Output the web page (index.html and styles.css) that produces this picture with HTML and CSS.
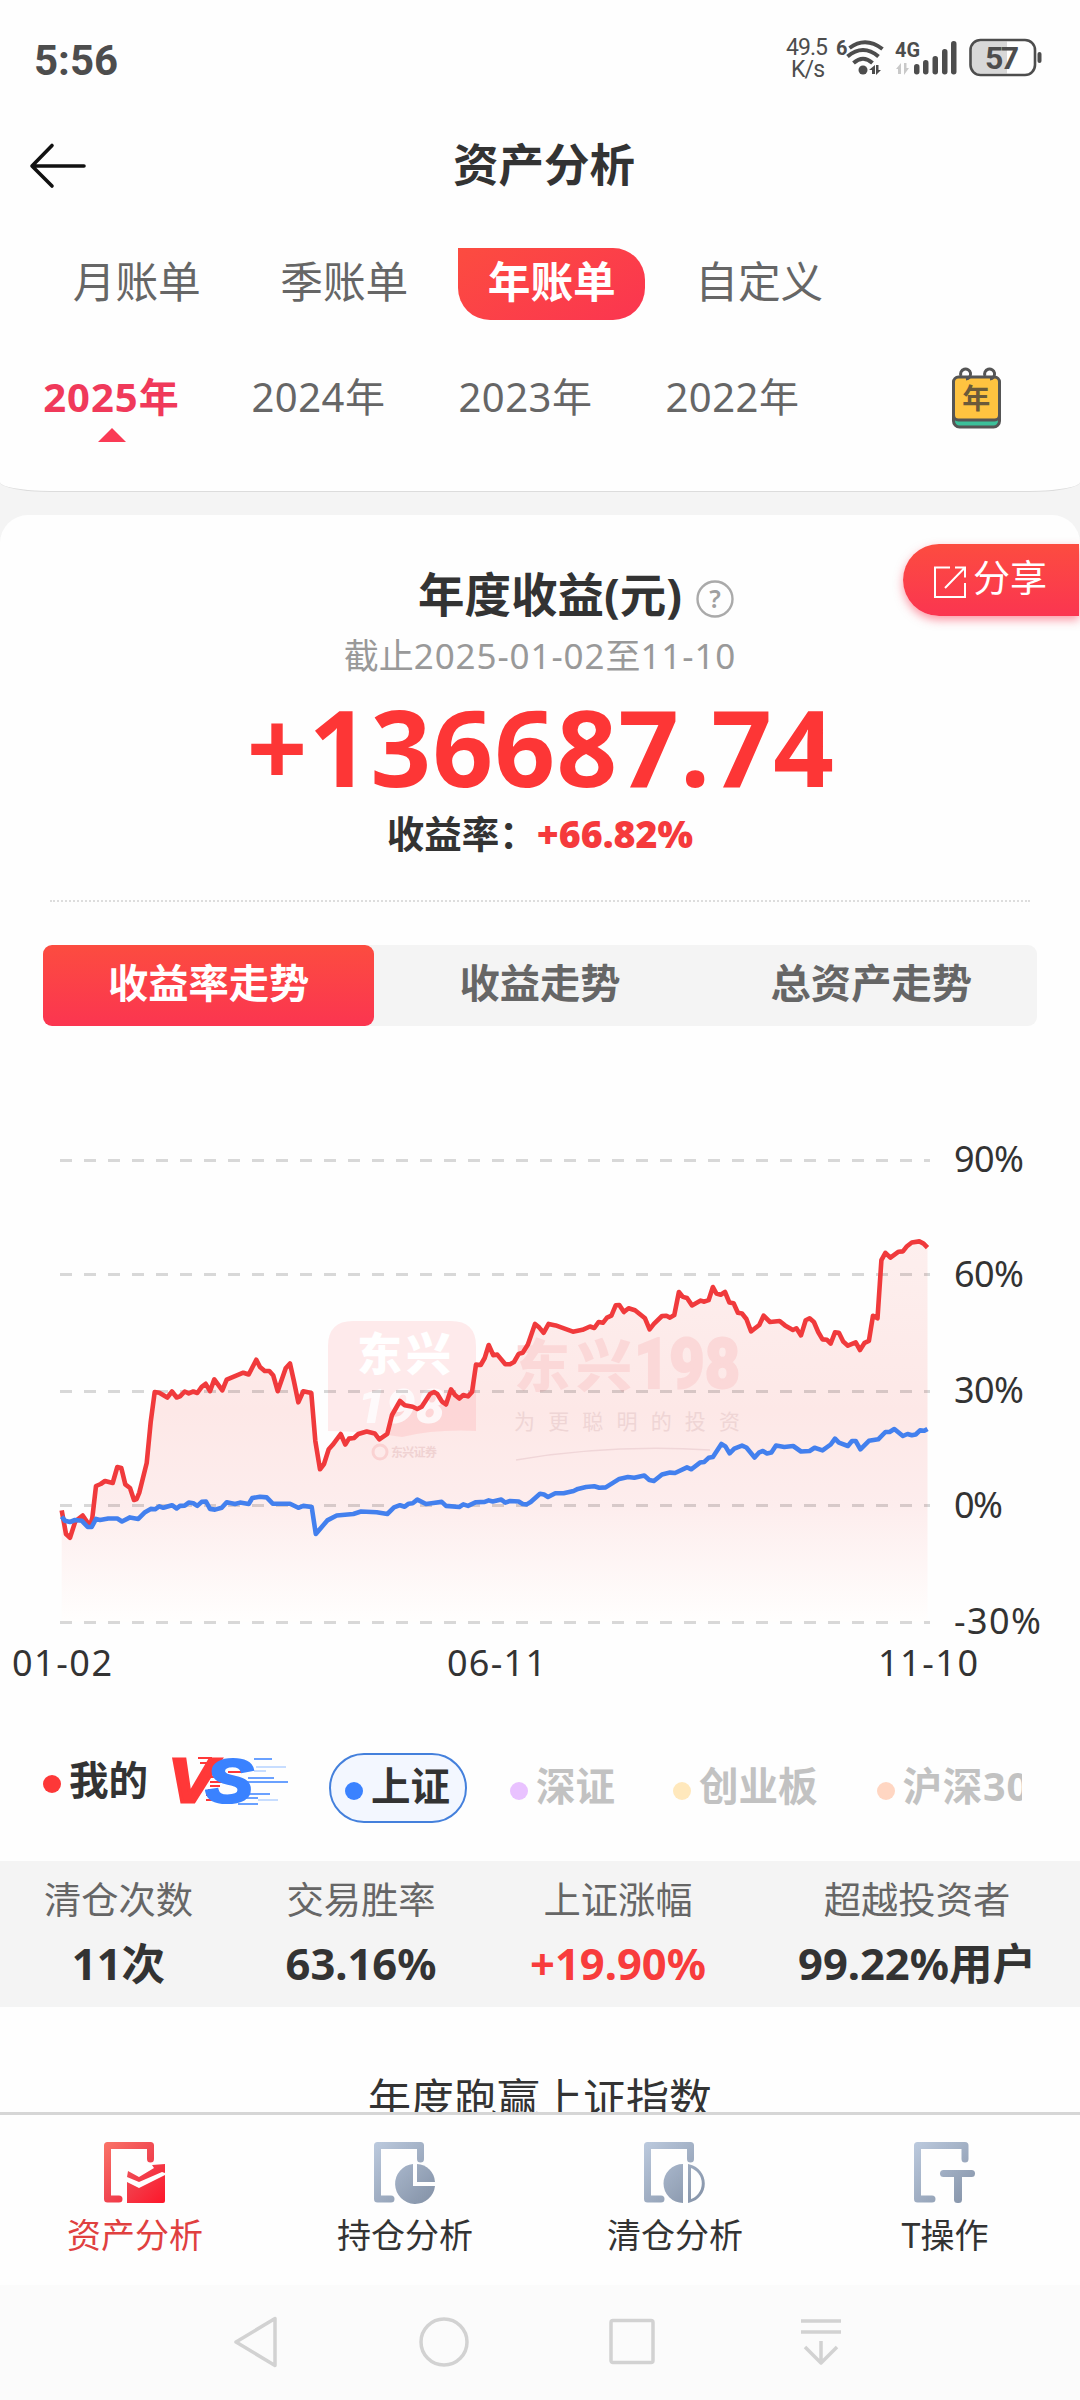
FILE: index.html
```html
<!DOCTYPE html>
<html lang="zh-CN">
    <head>
        <meta charset="UTF-8">
        <title>资产分析</title>
        <link rel="stylesheet" href="styles.css">
    </head>
    <body>
        <!-- Phone status bar -->
        <div class="status-bar">
            <span class="time">5:56</span>
            <svg class="status-icons" width="270" height="60" viewBox="0 0 270 60">
                <g fill="#4d4d4d">
                    <text x="-1" y="25" font-size="23" textLength="42">49.5</text>
                    <text x="4" y="47" font-size="23" textLength="34">K/s</text>
                    <text x="49" y="25" font-size="20" font-weight="700" textLength="10">6</text>
                    <circle cx="76" cy="40" r="4.5"/>
                    <path d="M82 40l6-5v9h-3v-4zM94 40l-5 5v-10h2.500v5z"/>
                    <text x="108" y="27" font-size="21" font-weight="700" textLength="25" lengthAdjust="spacingAndGlyphs">4G</text>
                    <rect x="127" y="34" width="5.500" height="10.500" rx="2.700"/>
                    <rect x="136" y="30" width="5.500" height="14.500" rx="2.700"/>
                    <rect x="145.500" y="26" width="5.500" height="18.500" rx="2.700"/>
                    <rect x="155" y="19" width="5.500" height="25.500" rx="2.700"/>
                    <rect x="164" y="11" width="5.500" height="33.500" rx="2.700"/>
                    <rect x="250.500" y="22" width="4" height="11" rx="2"/>
                </g>
                <path d="M109 39l5-6v11h-3v-5zM122 38l-5 7v-12h2.500v5z" fill="#c9c9c9"/>
                <g fill="none" stroke="#4d4d4d" stroke-width="4">
                    <path d="M62.500 18q16-12 33 1"/>
                    <path d="M60.500 26.500q15.500-13 31 0"/>
                    <path d="M66.500 33q9.500-8.500 19 0"/>
                </g>
                <path d="M220 11.500h-26q-10 0-10 10v12q0 10 10 10h26z" fill="#d8d8d8"/>
                <rect x="183.500" y="10" width="64.500" height="35" rx="10" fill="none" stroke="#4d4d4d" stroke-width="2.600"/>
                <text x="198" y="39" font-size="32" font-weight="700" fill="#4d4d4d" textLength="34">57</text>
            </svg>
        </div>

        <header class="header">
            <svg class="back" width="60" height="50" viewBox="0 0 60 50" fill="none" stroke="#111" stroke-width="3.600" stroke-linecap="round" stroke-linejoin="round">
                <path d="M55 27H4M23 6.500L3 27l20 20"/>
            </svg>
            <h1>资产分析</h1>
        </header>

        <div class="filter">
            <ul class="bill-tabs">
                <li>月账单</li>
                <li>季账单</li>
                <li class="active"><span>年账单</span></li>
                <li>自定义</li>
            </ul>
            <ul class="years">
                <li class="active"><span>2025年</span><i></i></li>
                <li><span>2024年</span></li>
                <li><span>2023年</span></li>
                <li><span>2022年</span></li>
                <li class="calendar">
                    <svg width="50" height="60" viewBox="0 0 50 60">
                        <rect x="1.500" y="8" width="46" height="49" rx="6" fill="#3cc09a" stroke="#555" stroke-width="3"/>
                        <rect x="1.500" y="7" width="46" height="43" rx="5" fill="#ffc340" stroke="#555" stroke-width="3"/>
                        <path d="M9 10a5 5 0 1 1 5 3M33 10a5 5 0 1 1 5 3" transform="translate(0 -4)" fill="none" stroke="#555" stroke-width="3"/>
                        <text x="24.500" y="39" font-size="28" font-weight="700" text-anchor="middle" fill="#6b5a3a">年</text>
                    </svg>
                </li>
            </ul>
        </div>

        <main class="card">
            <a class="share">
                <svg width="32" height="32" viewBox="0 0 32 32" fill="none" stroke="#fff" stroke-width="2">
                    <path d="M16 1.500H1v29.500h30V17M21 1.500h10v10M31 1.500L11 22"/>
                </svg>
                分享
            </a>
            <div class="profit">
                <h2>年度收益(元)<svg width="38" height="38" viewBox="0 0 38 38"><circle cx="19" cy="19" r="17.500" fill="none" stroke="#aaa" stroke-width="2.400"/><text x="19" y="28" font-size="25" font-weight="600" text-anchor="middle" fill="#a0a0a0">?</text></svg></h2>
                <p class="range">截止<span>2025-01-02</span>至<span>11-10</span></p>
                <p class="amount">+136687.74</p>
                <p class="rate">收益率：<b>+66.82%</b></p>
            </div>

            <ul class="trend-tabs">
                <li class="active">收益率走势</li>
                <li>收益走势</li>
                <li>总资产走势</li>
            </ul>

            <svg class="chart" width="1080" height="570" viewBox="0 0 1080 570">
                <defs>
                    <linearGradient id="area" gradientUnits="userSpaceOnUse" x1="0" y1="110" x2="0" y2="490">
                        <stop offset="0" stop-color="#fdefee"/>
                        <stop offset=".45" stop-color="#fde8e7"/>
                        <stop offset=".7" stop-color="#fdeded"/>
                        <stop offset="1" stop-color="#fffefd"/>
                    </linearGradient>
                </defs>
                <path fill="url(#area)" d="M61.7 380L66 404L70 408L75 391L83 385L90 396L92 388L96 356L101 354L105 351L113 353L117 337L121 338L125 354L130 358L134 370L139 363L147 333L151 292L155 262L159 263L167 267L172 261L177 267L185 261L197 263L206 254L210 261L214 249L222 260L227 250L243 243L249 244L256 230L265 241L269 241L273 246L278 261L286 238L290 233L298 272L303 261L311 263L315 311L320 339L329 319L341 304L345 314L349 309L358 304L367 301L375 303L379 309L387 304L392 285L400 271L405 275L417 279L422 277L430 264L434 262L442 272L446 274L451 259L459 269L463 265L468 266L472 262L476 235L481 235L489 215L493 225L497 225L505 234L510 234L519 224L523 223L535 194L544 203L549 194L573 202L590 196L594 198L599 192L603 193L611 186L616 175L619 175L624 182L629 178L645 188L650 199L662 186L670 188L674 185L679 162L683 167L687 168L692 175L701 171L704 172L709 170L713 157L716 163L721 165L725 162L729 172L734 173L738 183L742 183L746 189L751 201L759 195L764 186L770 192L780 191L793 200L796 198L801 205L806 190L810 188L814 192L822 209L831 213L835 202L839 203L848 216L856 212L860 220L869 211L873 186L877 188L881 130L885 123L890 128L903 121L912 112L919 111L927.5 118V492H61.700Z"/>

                <!-- Watermark -->
                <g class="watermark">
                    <path d="M353 191h98q25 0 25 25v85q-40-2-74 6q-36-6-74-6v-85q0-25 25-25z" fill="#fb5a66" opacity=".12"/>
                    <g fill="#fff" font-weight="900">
                        <text x="357" y="241" font-size="45" textLength="94">东兴</text>
                        <text x="357" y="293" font-size="48" font-style="italic" textLength="88" lengthAdjust="spacingAndGlyphs" opacity=".8" class="wm-num">198</text>
                    </g>
                    <text x="514" y="256" font-size="56" font-weight="900" fill="#fbd8d8" textLength="118">东兴</text>
                    <text x="634" y="258" font-size="70" font-weight="900" fill="#fbd8d8" stroke="#fbd8d8" stroke-width="2" textLength="106" lengthAdjust="spacingAndGlyphs" class="wm-num">198</text>
                    <text x="514" y="299" font-size="21" fill="#efd5d5" textLength="226">为更聪明的投资</text>
                    <circle cx="380" cy="322" r="7" fill="none" stroke="#fad2d2" stroke-width="3"/>
                    <text x="391" y="327" font-size="12" font-weight="700" fill="#f0d2d2" textLength="46">东兴证券</text>
                    <path d="M516 330Q610 314 710 320" fill="none" stroke="#f0d6d8" stroke-width="1.500"/>
                </g>

                <g stroke="#000" stroke-opacity=".15" stroke-width="3" stroke-dasharray="12 12">
                    <path d="M60 30.500H930"/>
                    <path d="M60 144.500H930"/>
                    <path d="M60 261.500H930"/>
                    <path d="M60 375.500H930"/>
                    <path d="M60 492.500H930"/>
                </g>

                <g fill="none" stroke-width="4.600" stroke-linejoin="round">
                    <path stroke="#f03a3c" d="M61.7 380.3L66 404L70 407.7L75.300 391.400L82.700 385.500L90 396L92.300 388L96 356L100.700 354L105 351L112.700 353L117.300 337L121.300 338L125.300 354.400L130 358L134 370L136.700 369L139.300 362.600L146.700 333L150.700 292L154.700 262L159.300 262.700L167.300 267.500L172 261.500L176.700 267.500L180 266.400L184.700 261.500L188.700 263.400L193.300 261.500L197.300 263L201.700 256.800L205.700 253.800L210 261.200L214.300 249.400L222.300 260.400L226.700 249.700L243.300 242.700L248.700 244.500L256.300 229.700L260 237L264.700 241L269.300 241L273.300 245.600L277.700 261.200L285.700 238.300L290 233.400L294 251.600L298.300 272.300L303.300 261.200L311.300 263L315.300 310.800L320 339.300L324 334L328.700 319.300L332.700 314.800L340.700 304L345.300 314.500L349 308.600L354 308L358.300 304L366.700 301.500L374.700 303.400L379.300 309.300L387.300 303.800L392 285L400 271L404.700 275.300L412.700 276.800L417.300 279L421.700 276.800L430 264L434 262L437.300 264L442 271.600L446 274.500L451 259.400L455.300 265.300L459.300 268.600L463.300 265L468 266.400L472 262L476 234.600L480.700 235L484.700 228L488.700 215L493.300 225.300L497.300 224.600L505.300 234.200L510 234.200L514 232L518.700 223.900L522.700 222.700L527.900 214.600L535 193.900L539.300 197.600L543.600 202.800L548.600 193.900L555.700 195.400L564.600 198.700L572.900 201.700L582.500 199.800L590 196.500L594.300 198L598.600 192L602.900 192.800L607 187.600L611.400 185.700L615.700 175.400L619.300 175L623.900 182L628.600 178.300L635 180.200L645 188.300L649.600 199.400L653.900 193.900L662 186L666.400 185.700L670 187.600L674.300 185L678.900 162L682.900 166.900L687 168L692 175.400L700.700 170.600L704.300 171.700L708.600 170.200L712.900 157L716.400 163.500L720.700 164.700L725 162L729.300 172.400L733.600 173.200L737.900 182.800L742 183.500L746.400 189L751 201.300L759.300 195L763.600 185.700L770 192L779.600 191L785 195.400L792.900 200L796.400 198.300L801 205.400L805.700 190.200L809.600 188.300L813.900 192L818.200 202L822.500 209.400L827 209.800L830.700 213.500L835 202.400L838.900 202.800L843.200 211.600L847.900 215.700L855.700 212.400L860 220L864.600 212.800L868.900 210.900L873 185.700L877.500 188.300L881.400 130.200L885.400 122.800L890.400 127.600L898.600 121.700L902.900 121.400L907 116.200L911.800 112.500L919.300 111.400L923.600 113.600L927.500 117.700"/>
                    <path stroke="#4380ee" d="M61.7 386.600L65 390.700L70 392L75 390L81.700 390.700L87.700 397L91.700 397L96 388.900L100 390L108.300 388.500L117.300 388.500L122 391.500L130 387.400L138.300 388.900L145 382.200L150.700 378.900L155 379.300L159.300 376.300L163.300 377.800L172 375.200L176.700 378.500L180 375.900L184.700 375.600L188.700 372.600L193.300 373.300L197.300 375.900L201.700 371.900L206 371.500L210 378.900L215 379.600L221.700 377.800L226.700 372.200L235 374L240 372.600L248.700 374L252.300 368L260 366.700L266.700 367.400L272.700 373.700L290 373.700L298.300 377.800L303.300 375.900L311.700 377L315.800 404L327.300 390.400L336.700 385.500L353.300 384L361 381.500L376.700 382.200L387.300 384L394 377.400L400 375.200L404.700 376.700L408.700 373.700L412.700 373.300L417.300 369.600L426 374L433.300 373L441.700 371.900L446 375.900L459.300 377L463.300 374.400L468 375.900L476 372.200L484.700 371.900L488.700 370.400L492.700 371.500L501.300 369.600L505.300 372.600L510 371L518.700 371.500L522.700 374L526.700 374.400L530.700 372L540 363.700L544 364.500L548 367L555.300 363.300L563.600 363.300L573.600 361L577.900 358.900L586 357L594.300 356.300L599.300 357.800L605.700 357.400L619.300 348.900L627.900 347L634.300 347.800L644.300 345.600L649.300 350L653.900 351L662 344.500L670 342.600L675 343L687 337.400L691.400 339.300L700 332.600L704.300 331.900L708.600 327.800L712.900 327L721.400 314L725.400 316.400L729.600 323.400L734.300 318.600L742 315.600L746.400 317.500L754.600 327.500L759.300 322.300L762.900 321L767 323.400L771.400 322.600L776 315.600L784.300 317L793.200 316L801 321.500L809.600 321L814.600 317.800L822.500 320.400L830.700 314.500L835 308.600L838.900 312.700L847.900 316L852 311L855.700 311L860.400 319.300L868.900 310.800L878.200 309.300L885.400 302L889.600 302L894.300 299L902.900 306L907.500 304L911.800 305.300L915.700 304.500L920 300.400L924.300 300.800L927.500 299"/>
                </g>

                <g class="axis">
                    <text x="954" y="42" textLength="70">90%</text>
                    <text x="954" y="157" textLength="70">60%</text>
                    <text x="954" y="273" textLength="70">30%</text>
                    <text x="954" y="388" textLength="49">0%</text>
                    <text x="954" y="504" textLength="87">-30%</text>
                    <text x="12" y="546" textLength="100">01-02</text>
                    <text x="447" y="546" textLength="99">06-11</text>
                    <text x="878" y="546" textLength="100">11-10</text>
                </g>
            </svg>

            <div class="legend">
                <span class="mine"><i></i>我的</span>
                <svg class="vs" width="120" height="56" viewBox="0 0 120 56">
                    <g stroke="#3a82ff" stroke-width="1.600">
                        <path d="M82 6h18M76 25h26M74 29h42M68 41h30M66 45h20M66 51h20"/>
                        <path d="M84 14h30M82 18h12M86 47h20" stroke="#b5d2ff"/>
                    </g>
                    <path d="M26 5h14M28 10h12M56 19h13M38 24h14M38 29h14M38 33h10M36 37h10M34 42h12M34 47h10" stroke="#ff3838" stroke-width="1.800"/>
                    <text x="-4" y="49" font-size="63" class="v" textLength="48" lengthAdjust="spacingAndGlyphs">V</text>
                    <text x="34" y="49" font-size="61" class="s" textLength="47" lengthAdjust="spacingAndGlyphs">S</text>
                </svg>
                <ul class="indexes">
                    <li class="sh active"><i></i>上证</li>
                    <li class="sz"><i></i>深证</li>
                    <li class="cyb"><i></i>创业板</li>
                    <li class="hs"><i></i>沪深300</li>
                </ul>
            </div>

            <div class="stats">
                <div><span>清仓次数</span><b>11次</b></div>
                <div><span>交易胜率</span><b>63.16%</b></div>
                <div><span>上证涨幅</span><b class="red">+19.90%</b></div>
                <div><span>超越投资者</span><b>99.22%用户</b></div>
            </div>

            <h3 class="beat">年度跑赢上证指数</h3>
        </main>

        <nav class="tab-bar">
            <a class="active">
                <svg width="62" height="62" viewBox="0 0 62 62">
                    <defs>
                        <linearGradient id="red" x1="0" y1="0" x2="62" y2="62" gradientUnits="userSpaceOnUse"><stop offset="0" stop-color="#fa7468"/><stop offset=".5" stop-color="#f04550"/><stop offset="1" stop-color="#ff1428"/></linearGradient>
                        <linearGradient id="gray" x1="0" y1="0" x2="62" y2="62" gradientUnits="userSpaceOnUse"><stop offset="0" stop-color="#bccade"/><stop offset="1" stop-color="#8290a5"/></linearGradient>
                    </defs>
                    <path d="M15 57H3.500V3.500H46.500V17" fill="none" stroke="url(#red)" stroke-width="7" stroke-linecap="round" stroke-linejoin="round"/>
                    <path d="M24 29l11 6l15-9l-2-3l13-1v9l-3-1l-23 10l-12-5z" fill="url(#red)"/>
                    <path d="M23 40l12 6l26-13v26q0 2-2 2H23z" fill="url(#red)"/>
                </svg>
                资产分析
            </a>
            <a>
                <svg width="62" height="62" viewBox="0 0 62 62">
                    <path d="M17 57H3.500V3.500H46.500V17" fill="none" stroke="url(#gray)" stroke-width="7" stroke-linecap="round" stroke-linejoin="round"/>
                    <path d="M39 22A20 20 0 1 0 61 44H39z" fill="url(#gray)"/>
                    <path d="M43 22A19 19 0 0 1 61 40H43z" fill="url(#gray)"/>
                </svg>
                持仓分析
            </a>
            <a>
                <svg width="62" height="62" viewBox="0 0 62 62">
                    <path d="M17 57H3.500V3.500H46.500V17" fill="none" stroke="url(#gray)" stroke-width="7" stroke-linecap="round" stroke-linejoin="round"/>
                    <path d="M39 22A19.500 19.500 0 0 0 39 61z" fill="url(#gray)"/>
                    <path d="M45.500 24A18 18 0 0 1 45.500 59z" fill="none" stroke="url(#gray)" stroke-width="3"/>
                </svg>
                清仓分析
            </a>
            <a>
                <svg width="62" height="62" viewBox="0 0 62 62">
                    <path d="M18 57H3.500V3.500H51V17" fill="none" stroke="url(#gray)" stroke-width="7" stroke-linecap="round" stroke-linejoin="round"/>
                    <rect x="26" y="28" width="35" height="7" rx="3.500" fill="url(#gray)"/>
                    <rect x="40" y="30" width="8" height="31" rx="3.500" fill="url(#gray)"/>
                </svg>
                T操作
            </a>
        </nav>

        <!-- Android system buttons -->
        <div class="system-nav">
            <svg width="48" height="54" viewBox="0 0 48 54"><path d="M44 3.500V50.500L5 27z"/></svg>
            <svg width="50" height="54" viewBox="0 0 50 54"><circle cx="25" cy="27" r="23"/></svg>
            <svg width="48" height="54" viewBox="0 0 48 54"><rect x="2" y="5.500" width="42" height="42" rx="2"/></svg>
            <svg width="44" height="54" viewBox="0 0 44 54"><path d="M4 6H44M4 17H44M24 26V47M8 32L24 48L40 32"/></svg>
        </div>
    </body>
</html>
```

FILE: styles.css
```css
* {
    margin: 0;
    padding: 0;
    box-sizing: border-box;
}

body {
    width: 1080px;
    height: 2400px;
    overflow: hidden;
    display: flex;
    flex-direction: column;
    font-family: 'Noto Sans', 'Noto Sans CJK SC', sans-serif;
    color: #333;
    background-color: #f4f4f4;
}

ul {
    list-style: none;
}

svg {
    display: block;
    flex: none;
    overflow: visible;
}

.status-bar {
    display: flex;
    justify-content: space-between;
    align-items: center;
    flex: none;
    height: 120px;
    padding: 0 23px 0 34px;
    font-family: Roboto, sans-serif;
    color: #4d4d4d;
    background-color: #fefefe;
}

.time {
    font-size: 42px;
    font-weight: 700;
}

.header {
    display: flex;
    align-items: center;
    flex: none;
    height: 88px;
    padding: 0 29px;
    background-color: #fefefe;
}

.header h1 {
    flex: 1;
    margin-right: 52px;
    text-align: center;
    font-size: 45.500px;
    line-height: 88px;
}

.filter {
    flex: none;
    height: 284px;
    padding-top: 40px;
    background-color: #fefefe;
    border-bottom: 1px solid #dcdcdc;
    border-radius: 0 0 50px 50px / 0 0 10px 10px;
}

.bill-tabs {
    display: flex;
    padding-left: 33px;
}

.bill-tabs li {
    width: 207.500px;
    height: 72px;
    text-align: center;
    font-size: 42.700px;
    line-height: 67px;
    color: #666;
}

.bill-tabs .active span {
    display: block;
    width: 187px;
    height: 72px;
    margin: 0 auto;
    font-weight: 700;
    color: white;
    background-image: linear-gradient(150deg, #fc4c40, #fb3550);
    border-radius: 0 32px 32px 32px;
}

.years {
    display: flex;
    height: 72px;
    margin-top: 50px;
    padding-left: 8px;
}

.years li {
    display: flex;
    flex-direction: column;
    align-items: center;
    width: 207px;
    font-size: 40px;
    line-height: 54px;
    letter-spacing: .5px;
    color: #666;
}

.years .active {
    font-weight: 700;
    letter-spacing: 1px;
    color: #f0395a;
}

.years .active i {
    margin-top: 4px;
    border: 14px solid transparent;
    border-top: 0;
    border-bottom: 14px solid #fa3a55;
}

.years .calendar {
    width: 50px;
    margin-left: 116px;
}

.card {
    position: relative;
    flex: none;
    height: 1597px;
    margin-top: 23px;
    overflow: hidden;
    background-color: #fefefe;
    border-radius: 28px 28px 0 0;
}

.share {
    position: absolute;
    top: 29px;
    right: 1px;
    display: flex;
    align-items: center;
    gap: 7px;
    width: 176px;
    height: 72px;
    padding: 0 0 4px 31px;
    font-size: 37px;
    line-height: 68px;
    color: white;
    background-image: linear-gradient(#fc4c40, #fb3550);
    border-radius: 36px 0 0 36px;
    box-shadow: 0 4px 10px rgba(251, 53, 80, .5);
}

.share svg {
    margin-top: 8px;
}

.profit {
    height: 387px;
    margin: 0 50px;
    padding-top: 49px;
    text-align: center;
    border-bottom: 2px dotted #ddd;
}

.profit h2 {
    display: flex;
    justify-content: center;
    gap: 14px;
    padding-left: 72px;
    font-size: 46.500px;
    line-height: 60px;
}

.profit h2 svg {
    margin-top: 16px;
}

.range {
    margin-top: 1px;
    font-size: 35px;
    line-height: 62px;
    color: #999;
}

.range span {
    letter-spacing: .9px;
}

.amount {
    margin-top: -4px;
    padding-left: 2px;
    font-size: 106px;
    font-weight: 700;
    line-height: 126px;
    letter-spacing: 1.300px;
    color: #fd3636;
}

.rate {
    margin-top: 3px;
    font-size: 37.500px;
    font-weight: 700;
    line-height: 44px;
}

.rate b {
    color: #f53a3c;
}

.trend-tabs {
    display: flex;
    height: 81px;
    margin: 43px 43px 0;
    background-color: #f4f4f4;
    border-radius: 9px;
}

.trend-tabs li {
    flex: 1;
    text-align: center;
    font-size: 40.300px;
    font-weight: 700;
    line-height: 76px;
    color: #666;
}

.trend-tabs .active {
    color: white;
    background-image: linear-gradient(#fc4c40, #fb3550);
    border-radius: 9px;
}

.chart {
    margin-top: 104px;
}

.axis {
    font-size: 36px;
    fill: #333;
}

.wm-num {
    font-family: Roboto, sans-serif;
}

.legend {
    display: flex;
    height: 161px;
    padding: 53px 58px 0 43px;
    font-size: 39.500px;
    font-weight: 700;
}

.legend i {
    flex: none;
    width: 18px;
    height: 18px;
    border-radius: 50%;
}

.mine {
    display: flex;
    align-items: center;
    gap: 8px;
    width: 127px;
    height: 54px;
    margin-top: -2px;
}

.mine i {
    margin-top: 11px;
    background-color: #fd3838;
}

.vs {
    margin-left: 2px;
}

.vs .v, .vs .s {
    font-family: 'Liberation Sans', sans-serif;
    font-weight: 700;
    font-style: italic;
    stroke-width: 3;
}

.vs .v {
    fill: #ff3838;
    stroke: #ff3838;
}

.vs .s {
    fill: #3a82ff;
    stroke: #3a82ff;
}

.indexes {
    display: flex;
    width: 693px;
    height: 70px;
    margin-left: 37px;
    overflow: hidden;
    white-space: nowrap;
    color: #c2c2c2;
}

.indexes li {
    display: flex;
    align-items: center;
    flex: none;
    gap: 8px;
    margin-left: 43px;
    line-height: 64px;
    padding-bottom: 4px;
}

.indexes li i {
    margin-top: 9px;
}

.indexes .active {
    margin-left: 0;
    height: 70px;
    padding: 0 15px 4px 14px;
    color: #333;
    background-color: #f3f7ff;
    border: 2px solid #4480dc;
    border-radius: 35px;
}

.indexes .cyb {
    margin-left: 58px;
}

.indexes .hs {
    margin-left: 59px;
    letter-spacing: .8px;
}

.sh i { background-color: #3a82ff; }
.sz i { background-color: #e9c2ff; }
.cyb i { background-color: #ffe8bc; }
.hs i { background-color: #ffd6c2; }

.stats {
    display: grid;
    grid-template-columns: 237px 248px 266px 1fr;
    height: 146px;
    padding-top: 9px;
    text-align: center;
    background-color: #f4f4f4;
}

.stats span {
    display: block;
    font-size: 37.300px;
    line-height: 60px;
    color: #666;
}

.stats b {
    display: block;
    font-size: 43.500px;
    line-height: 67px;
}

.stats div:last-child {
    padding-left: 3px;
}

.stats .red {
    color: #f83c3c;
}

.beat {
    padding-top: 65px;
    text-align: center;
    font-size: 43px;
    font-weight: 400;
    line-height: 54px;
}

.tab-bar {
    display: flex;
    flex: none;
    height: 173px;
    padding-top: 27px;
    background-color: #fefefe;
    border-top: 3px solid #d6d6d6;
}

.tab-bar a {
    display: flex;
    flex-direction: column;
    align-items: center;
    width: 270px;
    font-size: 34px;
    line-height: 62px;
}

.tab-bar .active {
    color: #e0403f;
}

.system-nav {
    display: flex;
    flex: none;
    height: 115px;
    padding: 30px 0 0 231px;
    background-color: #fbfbfb;
}

.system-nav svg {
    fill: none;
    stroke: #d2d2d2;
    stroke-width: 3.500;
    stroke-linejoin: round;
}

.system-nav svg + svg {
    margin-left: 140px;
}
```
